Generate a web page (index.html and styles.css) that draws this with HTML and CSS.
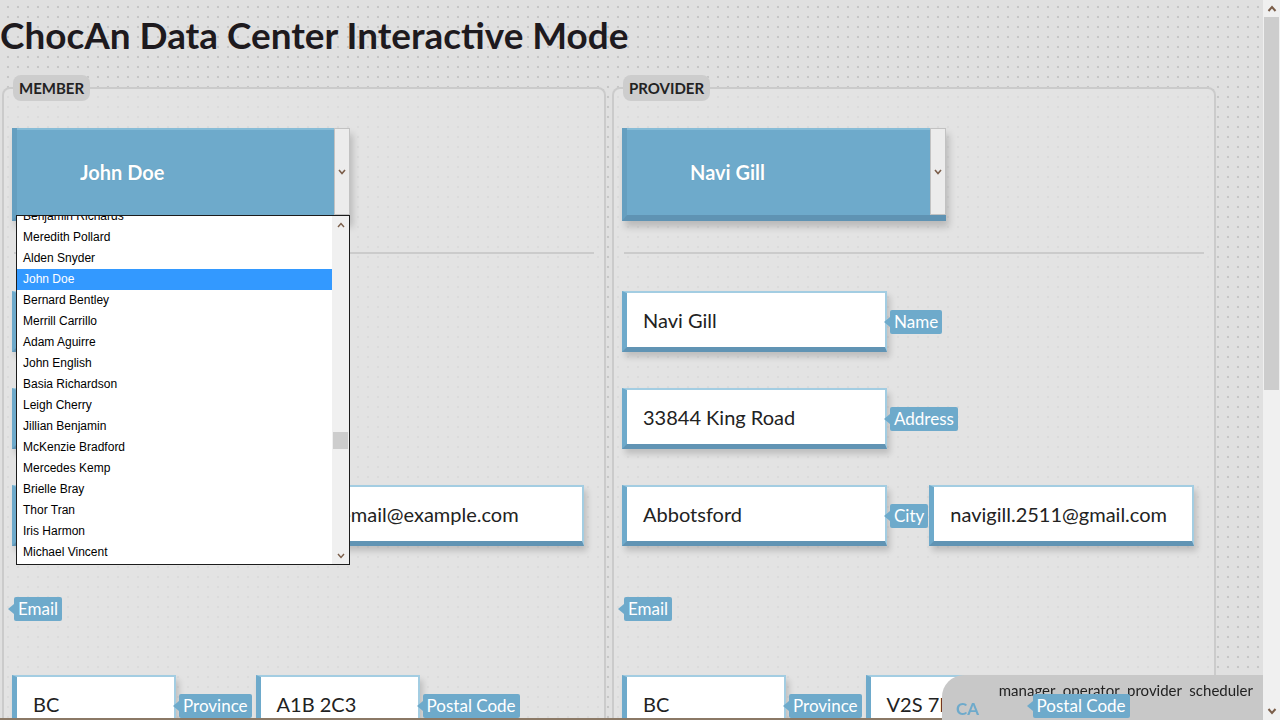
FILE: index.html
```html
<!DOCTYPE html>
<html lang="en">
<head>
<meta charset="utf-8">
<title>ChocAn Data Center Interactive Mode</title>
<link rel="stylesheet" href="styles.css">
</head>
<body>
<div class="app">
  <div class="page">
    <div class="viewport">
      <h1 class="title">ChocAn Data Center Interactive Mode</h1>
      <div class="panels">
        <section class="panel">
          <div class="chip">Member</div>
          <div class="select member-select">
            <div class="select-value">John Doe</div>
            <div class="select-arrow"><svg width="8" height="6" viewBox="0 0 8 6"><polyline points="1,1 4,4.5 7,1" fill="none" stroke="#7b5e4a" stroke-width="1.6"/></svg></div>
            <div class="dropdown">
              <div class="dropdown-list">
                <div class="option first">Benjamin Richards</div>
                <div class="option">Meredith Pollard</div>
                <div class="option">Alden Snyder</div>
                <div class="option selected">John Doe</div>
                <div class="option">Bernard Bentley</div>
                <div class="option">Merrill Carrillo</div>
                <div class="option">Adam Aguirre</div>
                <div class="option">John English</div>
                <div class="option">Basia Richardson</div>
                <div class="option">Leigh Cherry</div>
                <div class="option">Jillian Benjamin</div>
                <div class="option">McKenzie Bradford</div>
                <div class="option">Mercedes Kemp</div>
                <div class="option">Brielle Bray</div>
                <div class="option">Thor Tran</div>
                <div class="option">Iris Harmon</div>
                <div class="option">Michael Vincent</div>
                <div class="option">Nolan Ross</div>
              </div>
              <div class="list-scroll">
                <div class="ls-btn"><svg width="8" height="6" viewBox="0 0 8 6"><polyline points="1,5 4,1.5 7,5" fill="none" stroke="#7b5e4a" stroke-width="1.4"/></svg></div>
                <div class="ls-track"><div class="ls-thumb"></div></div>
                <div class="ls-btn"><svg width="8" height="6" viewBox="0 0 8 6"><polyline points="1,1 4,4.5 7,1" fill="none" stroke="#7b5e4a" stroke-width="1.4"/></svg></div>
              </div>
            </div>
          </div>
          <div class="sep"></div>
          <div class="row">
            <div class="field wide">John Doe</div>
            <span class="tag">Name</span>
          </div>
          <div class="row">
            <div class="field wide">1234 Main Street</div>
            <span class="tag">Address</span>
          </div>
          <div class="row">
            <div class="field wide">Vancouver</div>
            <span class="tag">City</span>
            <div class="field wide gap">email@example.com</div>
          </div>
          <div class="row label-row">
            <span class="tag">Email</span>
          </div>
          <div class="row last-row">
            <div class="field short">BC</div>
            <span class="tag">Province</span>
            <div class="field short gap2">A1B 2C3</div>
            <span class="tag">Postal Code</span>
          </div>
        </section>

        <section class="panel">
          <div class="chip">Provider</div>
          <div class="select provider-select">
            <div class="select-value">Navi Gill</div>
            <div class="select-arrow"><svg width="8" height="6" viewBox="0 0 8 6"><polyline points="1,1 4,4.5 7,1" fill="none" stroke="#7b5e4a" stroke-width="1.6"/></svg></div>
          </div>
          <div class="sep"></div>
          <div class="row">
            <div class="field wide">Navi Gill</div>
            <span class="tag">Name</span>
          </div>
          <div class="row">
            <div class="field wide">33844 King Road</div>
            <span class="tag">Address</span>
          </div>
          <div class="row">
            <div class="field wide">Abbotsford</div>
            <span class="tag">City</span>
            <div class="field wide gap">navigill.2511@gmail.com</div>
          </div>
          <div class="row label-row">
            <span class="tag">Email</span>
          </div>
          <div class="row last-row">
            <div class="field short">BC</div>
            <span class="tag">Province</span>
            <div class="field short gap2">V2S 7P2</div>
            <span class="tag">Postal Code</span>
          </div>
        </section>
      </div>
    </div>
    <div class="strip"></div>
  </div>
  <div class="scrollbar">
    <div class="sb-btn"><svg width="10" height="7" viewBox="0 0 10 7"><polyline points="1.5,6 5,2 8.5,6" fill="none" stroke="#7b5e4a" stroke-width="2"/></svg></div>
    <div class="sb-track"><div class="sb-thumb"></div></div>
    <div class="sb-btn"><svg width="10" height="7" viewBox="0 0 10 7"><polyline points="1.5,1 5,5 8.5,1" fill="none" stroke="#7b5e4a" stroke-width="2"/></svg></div>
  </div>
</div>
<div class="roles">
  <div class="roles-list">manager&nbsp; operator&nbsp; provider&nbsp; scheduler</div>
  <div class="roles-country">CA</div>
</div>
</body>
</html>
```
FILE: styles.css
```css
* { box-sizing: border-box; }

html, body {
  margin: 0;
  padding: 0;
  height: 720px;
  overflow: hidden;
}

body {
  font-family: Lato, "Open Sans", sans-serif;
  color: #222;
  background-color: #e0e0e0;
}

.app {
  display: flex;
  height: 720px;
}

.page {
  flex: 1;
  display: flex;
  flex-direction: column;
  min-width: 0;
}

.viewport {
  flex: 1;
  overflow: hidden;
  padding-top: 14px;
  background-color: #e0e0e0;
  background-image: radial-gradient(circle at 8px 7px, #c6c6c6 0.9px, rgba(198,198,198,0) 1.6px);
  background-size: 10px 10px;
}

.strip {
  height: 2px;
  background: #8b7966;
}

.title {
  margin: 0;
  font-size: 36.9px;
  line-height: 42px;
  font-weight: 700;
  color: #1e1a1e;
  white-space: nowrap;
}

.panels {
  display: flex;
  gap: 6px;
  padding-left: 2px;
  margin-top: 31px;
}

.panel {
  width: 604px;
  height: 700px;
  flex: none;
  border: 2px solid #cbcbcb;
  border-bottom: none;
  border-radius: 8px 8px 0 0;
  padding: 0 8px;
  background-color: rgba(228, 228, 228, 0.7);
}

.chip {
  display: block;
  width: max-content;
  margin-top: -14px;
  margin-left: 1px;
  height: 26px;
  line-height: 26px;
  padding: 0 6px;
  background: #cdcdcd;
  border-radius: 8px;
  font-size: 15px;
  font-weight: 700;
  text-transform: uppercase;
  color: #222;
}

/* select */
.select {
  position: relative;
  display: flex;
  margin-top: 27px;
  height: 93px;
  background: #6eaacb;
  border-left: 5px solid #659fc0;
  border-bottom: 6px solid #5f93b3;
  box-shadow: 3px 6px 7px rgba(0, 0, 0, 0.18);
}

.member-select { width: 338px; }
.provider-select { width: 324px; }

.select-value {
  flex: 1;
  border-top: 2px solid #86bcd7;
  padding-left: 63px;
  font-size: 20px;
  font-weight: 700;
  line-height: 84px;
  color: #fff;
  text-shadow: 0 0 1px rgba(0,0,0,0.15);
}

.select-arrow {
  width: 16px;
  height: 87px;
  background: #ececec;
  border: 1px solid #c2c2c2;
  display: flex;
  align-items: center;
  justify-content: center;
}

/* open dropdown */
.dropdown {
  position: absolute;
  left: -1px;
  top: 87px;
  width: 334px;
  height: 350px;
  background: #fff;
  border: 1px solid #1c1c1c;
  display: flex;
  z-index: 5;
}

.dropdown-list {
  flex: 1;
  overflow: hidden;
}

.option {
  height: 21px;
  line-height: 21px;
  padding-left: 6px;
  font-family: "Liberation Sans", Arial, sans-serif;
  font-size: 12px;
  color: #000;
  white-space: nowrap;
}

.option.first { margin-top: -10px; }

.option.selected {
  background: #3399ff;
  color: #fff;
}

.list-scroll {
  width: 17px;
  display: flex;
  flex-direction: column;
  background: #f0f0f0;
}

.ls-btn {
  height: 17px;
  display: flex;
  align-items: center;
  justify-content: center;
}

.ls-track {
  flex: 1;
  padding-top: 199px;
}

.ls-thumb {
  width: 15px;
  height: 17px;
  margin-left: 1px;
  background: #cdcdcd;
}

.sep {
  height: 2px;
  margin: 31px 2px 0;
  background: #cbcbcb;
}

/* rows */
.row {
  display: flex;
  align-items: center;
  margin-top: 36px;
}

.sep + .row { margin-top: 37px; }

.row.label-row { margin-top: 51px; height: 24px; }
.row.last-row { margin-top: 54px; }

.field {
  height: 61px;
  background: #fff;
  border-top: 2px solid #a3cde2;
  border-right: 2px solid #a3cde2;
  border-left: 5px solid #6eaacb;
  border-bottom: 5px solid #6194b4;
  padding-left: 16px;
  font-size: 20px;
  line-height: 54px;
  color: #222;
  white-space: nowrap;
  overflow: hidden;
  box-shadow: 3px 5px 6px rgba(0, 0, 0, 0.16);
}

.field.wide { width: 265px; }
.field.short { width: 164px; }
.field.gap { margin-left: 1px; }
.field.gap2 { margin-left: 4px; }

.tag {
  position: relative;
  z-index: 3;
  display: inline-block;
  margin-left: 3px;
  height: 24px;
  line-height: 24px;
  padding: 0 4px;
  background: #6eaacb;
  color: #fff;
  font-size: 17px;
  border-radius: 2px;
  white-space: nowrap;
}

.tag::before {
  content: "";
  position: absolute;
  left: -6px;
  top: 7px;
  border-top: 5px solid transparent;
  border-bottom: 5px solid transparent;
  border-right: 6px solid #6eaacb;
}

.label-row .tag { margin-left: 2px; }

/* page scrollbar */
.scrollbar {
  width: 17px;
  flex: none;
  display: flex;
  flex-direction: column;
  background: #f0f0f0;
}

.sb-btn {
  height: 17px;
  display: flex;
  align-items: center;
  justify-content: center;
}

.sb-track {
  flex: 1;
}

.sb-thumb {
  width: 15px;
  margin-left: 1px;
  height: 373px;
  background: #cdcdcd;
}

/* bottom-right roles overlay */
.roles {
  position: fixed;
  right: 17px;
  bottom: 0;
  width: 321px;
  height: 45px;
  background: #c8c8c8;
  border-top-left-radius: 22px;
  z-index: 2;
  font-family: Lato, "Open Sans", sans-serif;
}

.roles-list {
  text-align: right;
  padding: 6px 10px 0 0;
  font-size: 15px;
  line-height: 18px;
  color: #222;
}

.roles-country {
  padding-left: 14px;
  font-size: 17px;
  font-weight: 700;
  line-height: 20px;
  color: #6eaacb;
}
```
